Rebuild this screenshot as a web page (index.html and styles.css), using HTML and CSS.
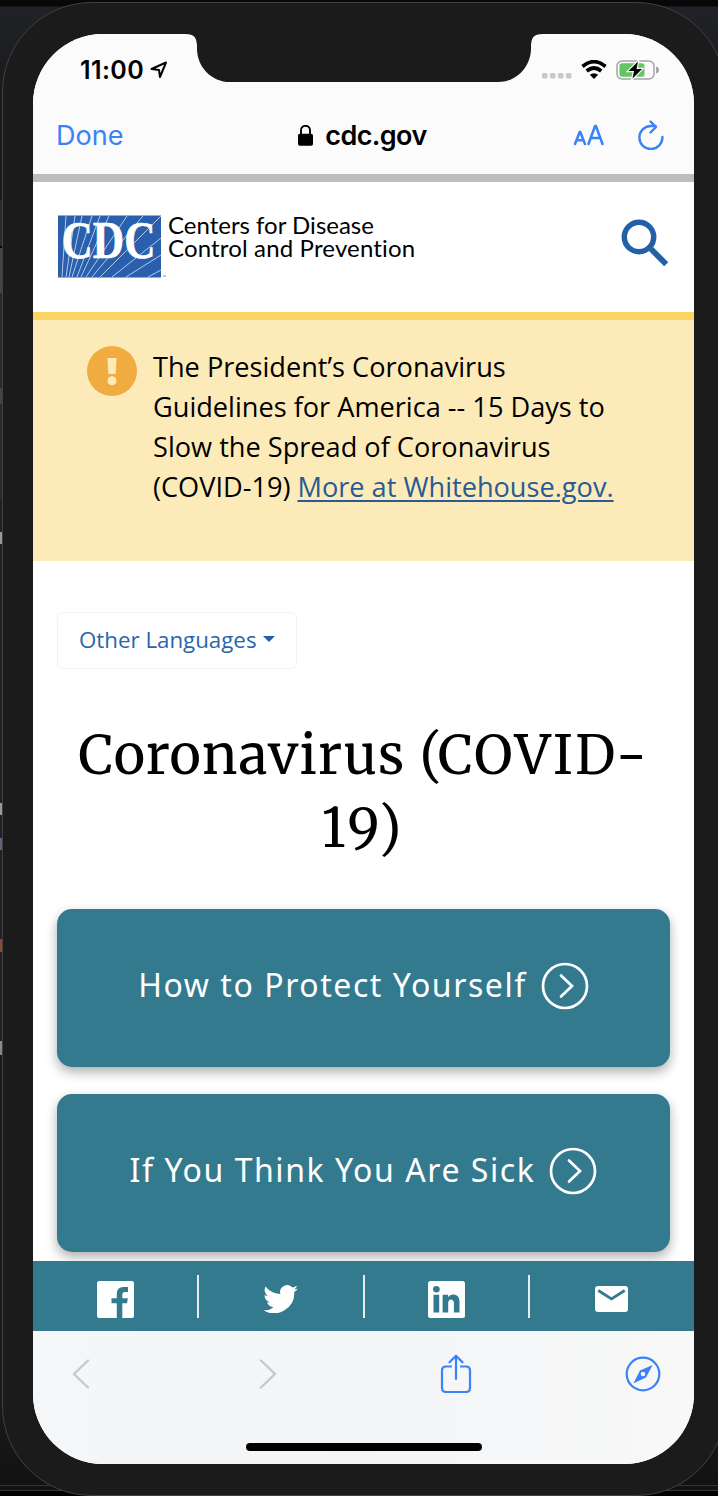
FILE: index.html
```html
<!DOCTYPE html>
<html lang="en">
<head>
<meta charset="utf-8">
<title>Coronavirus (COVID-19)</title>
<link rel="stylesheet" href="styles.css">
</head>
<body>
<div class="desktop">
  <div class="phone">
    <div class="screen">
      <svg class="notch" viewBox="0 0 358 49"><path d="M0 0C10 0 11.500 4 12 12C11 32 26 48 45 48H313C332 48 347 32 346 12C346.500 4 348 0 358 0Z" fill="#1b1b1b"/></svg>

      <div class="status">
        <div class="clock"><span>11:00</span>
          <svg width="18" height="18" viewBox="0 0 18 18"><path d="M1.500 8L16 1.500L10 16L9 9Z" fill="none" stroke="#000" stroke-width="2" stroke-linejoin="round"/></svg>
        </div>
        <div class="signals">
          <svg width="30" height="20" viewBox="0 0 30 20" fill="#c8c8c8"><rect x="0" y="13" width="5.500" height="5.500" rx="1.500"/><rect x="8" y="13" width="5.500" height="5.500" rx="1.500"/><rect x="16" y="13" width="5.500" height="5.500" rx="1.500"/><rect x="24" y="13" width="5.500" height="5.500" rx="1.500"/></svg>
          <svg width="26" height="20" viewBox="0 0 26 20"><path d="M1.500 6.500Q13-3.200 24.500 6.500M5.700 11Q13 5 20.300 11" fill="none" stroke="#000" stroke-width="3.700"/><path d="M13 19L8.800 14.800Q13 11.600 17.200 14.800Z"/></svg>
          <svg width="44" height="20" viewBox="0 0 44 20"><rect x="1" y="1" width="37" height="18" rx="5" fill="none" stroke="#a5a5a5" stroke-width="1.500"/><path d="M40 6.500Q43 7 43 10T40 13.500Z" fill="#a5a5a5"/><rect x="3.500" y="3.300" width="25" height="13.500" rx="2.500" fill="#65c466"/><path d="M22 1.500L12.500 11H18L16.500 18.500L26 9H20.500Z" stroke="#fbfbfb" stroke-width="2.400"/><path d="M22 1.500L12.500 11H18L16.500 18.500L26 9H20.500Z"/></svg>
        </div>
      </div>

      <div class="addressbar">
        <span class="done">Done</span>
        <div class="site">
          <svg width="15" height="21" viewBox="0 0 15 21"><path d="M3 10V5.500C3-.8 12-.8 12 5.500V10" fill="none" stroke="#000" stroke-width="1.900"/><rect y="8.800" width="15" height="12" rx="1.800"/></svg>
          <span>cdc.gov</span>
        </div>
        <div class="tools">
          <svg width="32" height="22" viewBox="0 0 32 22" fill="none" stroke="#3982f7" stroke-width="2.500" stroke-linecap="round" stroke-linejoin="round"><path d="M2 20L6.700 8H7.300L12 20M3.700 16.200H10.300M15.500 20L22.100 2H22.900L29.500 20M18 14H27"/></svg>
          <svg width="26" height="30" viewBox="0 0 26 30" fill="none" stroke="#3982f7" stroke-width="2.400" stroke-linecap="round" stroke-linejoin="round"><path d="M24.400 17A11.500 11.500 0 1 1 12.900 6H17.500M12.500 1.500L18 7L12.500 12.500"/></svg>
        </div>
      </div>

      <div class="masthead">
        <svg class="logo" width="110" height="63" viewBox="0 0 110 63"><rect y=".5" width="103" height="62" fill="#295fac"/><g fill="none" stroke="#c3d6ee" stroke-width=".9"><path d="M4 62L8 1M8 62L17 1M11 62L24 1M14 62L34 1M19 62L42 1M23 62L51 1M28 62L69 1M34 62L85 1M42 62L103 1M54 62L103 23M68 62L103 40M90 62L103 55"/></g><text x="3.500" y="43" textLength="94" lengthAdjust="spacingAndGlyphs" class="monogram">CDC</text><path d="M105 61H108" stroke="#6c91c8"/></svg>
        <div class="agency"><p>Centers for Disease</p><p>Control and Prevention</p></div>
        <svg class="search" width="48" height="48" viewBox="0 0 48 48" fill="none" stroke="#2460a8"><circle cx="18" cy="18" r="14.700" stroke-width="5.500"/><path d="M30 30L45.200 45.200" stroke-width="5.800"/></svg>
      </div>

      <div class="alert">
        <svg width="50" height="50" viewBox="0 0 50 50"><circle cx="25" cy="25" r="25" fill="#f0ac41"/><path d="M20.500 13Q20.500 12 21.500 12H28.500Q29.500 12 29.500 13L28.700 27Q28.600 28 27.600 28H22.400Q21.400 28 21.300 27Z" fill="#fcebb9"/><circle cx="25" cy="34.700" r="4.500" fill="#fcebb9"/></svg>
        <p>The President’s Coronavirus<br>Guidelines for America -- 15 Days to<br>Slow the Spread of Coronavirus<br>(COVID-19) <a>More at Whitehouse.gov.</a></p>
      </div>

      <div class="content">
        <div class="languages"><span>Other Languages</span><i class="caret"></i></div>
        <h1>Coronavirus <span class="wide">(COVID-</span><br><span class="wider">19)</span></h1>
        <div class="card"><span>How to Protect Yourself</span>
          <svg width="48" height="48" viewBox="0 0 48 48" fill="none" stroke="#fff" stroke-width="2.700" stroke-linecap="round"><circle cx="24" cy="24" r="22"/><path d="M20 13.500L31 24L20 34.500"/></svg>
        </div>
        <div class="card"><span>If You Think You Are Sick</span>
          <svg width="48" height="48" viewBox="0 0 48 48" fill="none" stroke="#fff" stroke-width="2.700" stroke-linecap="round"><circle cx="24" cy="24" r="22"/><path d="M20 13.500L31 24L20 34.500"/></svg>
        </div>
      </div>

      <div class="share">
        <div><svg width="37" height="37" viewBox="0 0 37 37"><path fill="#fff" d="M2 0H35Q37 0 37 2V35Q37 37 35 37H25.300V22.300H30L30.800 17.200H25.300V13.500Q25.300 11 28 11H31V6H26.500Q19.800 6 19.800 13V17.200H14.500V22.300H19.800V37H2Q0 37 0 35V2Q0 0 2 0Z"/></svg></div>
        <div><svg width="35" height="29" viewBox="0 1.500 24 20"><path fill="#fff" d="M24 4.600c-.9.400-1.800.7-2.800.8 1-.6 1.800-1.600 2.200-2.700-1 .6-2 1-3.100 1.200A4.900 4.900 0 0 0 11.900 8.400C7.700 8.200 4.100 6.200 1.700 3.200A4.900 4.900 0 0 0 3.200 9.700C2.400 9.700 1.700 9.500 1 9.100v.1c0 2.300 1.600 4.300 3.900 4.800-.7.200-1.500.2-2.200.1.600 2 2.400 3.400 4.600 3.400A9.900 9.900 0 0 1 0 19.500 14 14 0 0 0 21.500 7.100c1-.7 1.800-1.500 2.500-2.500Z"/></svg></div>
        <div><svg width="37" height="37" viewBox="0 0 37 37"><rect width="37" height="37" rx="2.500" fill="#fff"/><circle cx="8.400" cy="8.300" r="3.300" fill="#337a8f"/><path fill="#337a8f" d="M5.500 13.700H11.200V31.500H5.500ZM14.600 13.700H20.100V16.200C22.900 12.100 31.500 12.400 31.500 20.400V31.500H25.900V22C25.900 17.200 20.200 17.300 20.200 21.800V31.500H14.600Z"/></svg></div>
        <div><svg width="33" height="26" viewBox="0 0 33 26"><rect width="33" height="26" rx="3" fill="#fff"/><path d="M3.300 4.500L16.500 12.900L29.700 4.500" fill="none" stroke="#337a8f" stroke-width="2.800"/></svg></div>
      </div>

      <div class="bottom">
        <div class="toolbar">
          <svg width="36" height="30" viewBox="0 0 18 30" class="nav"><path d="M16 1.500L2 15L16 28.500"/></svg>
          <svg width="36" height="30" viewBox="0 0 18 30" class="nav"><path d="M2 1.500L16 15L2 28.500"/></svg>
          <svg width="36" height="40" viewBox="0 0 32 40" class="tool"><path d="M11 12.500H6Q2 12.500 2 16.500V34Q2 38 6 38H26Q30 38 30 34V16.500Q30 12.500 26 12.500H21M16 25V2.500M9.500 8.300L16 1.800L22.500 8.300"/></svg>
          <svg width="36" height="36" viewBox="0 0 36 36" class="tool"><circle cx="18" cy="18" r="16.300"/><path fill="#3982f7" stroke="none" d="M27.600 9L21 21.500L8.500 27.200L15 14.500ZM18 15.700A2.300 2.300 0 1 0 18 20.300A2.300 2.300 0 1 0 18 15.700Z" fill-rule="evenodd"/></svg>
        </div>
        <div class="home"><i></i></div>
      </div>
    </div>
  </div>
</div>
</body>
</html>
```
FILE: styles.css
```css
* { box-sizing: border-box; }
body { margin: 0; width: 718px; height: 1496px; overflow: hidden; }
svg { display: block; flex: none; }
p, h1 { margin: 0; }
.desktop {
  width: 718px; height: 1496px; overflow: hidden; padding: 2px 0 0 2px;
  background:
    linear-gradient(#353535 0 0) 0 1485px / 718px 1px no-repeat,
    linear-gradient(#353535 0 0) 0 1490px / 718px 1px no-repeat,
    linear-gradient(#000 0 0) 0 1491px / 718px 5px no-repeat,
    linear-gradient(transparent 200px, #2b2b2b 200px 246px, #000 246px 248px, #444 248px 293px, #2b2b2b 293px 388px, #444 388px 404px, #2b2b2b 404px 499px, #202126 499px 532px, #999 532px 544px, #202126 544px 803px, #999 803px 815px, #202126 815px 838px, #646081 838px 850px, #202126 850px 939px, #8c4939 939px 952px, #202126 952px 1041px, #888 1041px 1055px, transparent 1055px) 0 0 / 3px 1496px no-repeat,
    linear-gradient(#080808 0 6px, #202227 7px, #191a1d 100px, #191a1d 1400px, #111 1496px);
}
.phone { width: 724px; height: 1494px; padding: 31px 30px 30px 30px; border: 1px solid #414141; border-radius: 90px; background: #1b1b1b; }
.screen { position: relative; display: flex; flex-direction: column; width: 661px; height: 1430px; overflow: hidden; border-radius: 70px; background: #fff; color: #000; font-family: Inter, "Liberation Sans", sans-serif; }
.notch { position: absolute; top: 0; left: 152px; width: 358px; height: 49px; }
.status { display: flex; justify-content: space-between; align-items: center; height: 72px; padding: 0 34px 0 47px; background: #fbfbfb; }
.clock { display: flex; align-items: center; gap: 6px; font-size: 25px; font-weight: 600; letter-spacing: .4px; }
.signals { display: flex; align-items: center; gap: 9px; }
.addressbar { display: grid; grid-template-columns: 150px 1fr 150px; align-items: center; height: 68px; padding: 0 30px 10px 23px; background: #fbfbfb; font-size: 27px; }
.done { color: #3982f7; }
.site { display: flex; align-items: center; justify-content: center; gap: 12px; padding: 0 0 0 5px; font-weight: 600; letter-spacing: -.6px; }
.tools { display: flex; align-items: center; justify-content: flex-end; gap: 33px; }
.masthead { display: flex; align-items: flex-start; height: 138px; padding: 33px 25px 0; border-top: 8px solid #bdbdbd; }
.logo { overflow: visible; }
.monogram { fill: #fff; stroke: #fff; stroke-width: .6px; font: bold 52px "Liberation Serif", serif; }
.agency { margin-top: -2px; font: 24px/23px Lato, sans-serif; font-variant-ligatures: none; white-space: nowrap; }
.agency p + p { letter-spacing: .15px; }
.search { margin: 4px 0 0 auto; }
.alert { display: flex; gap: 16px; height: 249px; padding: 26px 54px 0; border-top: 8px solid #fad566; background: #fcebb9; font: 27.150px/40px "Open Sans", "Noto Sans", sans-serif; white-space: nowrap; }
.alert p { padding-top: 1px; }
.alert a { color: #285b94; text-decoration: underline; text-decoration-thickness: 1.500px; text-underline-offset: 3px; }
.content { flex: 1; min-height: 0; padding: 51px 24px 0; overflow: hidden; }
.languages { display: flex; align-items: center; gap: 6px; width: 240px; height: 57px; padding: 0 0 2px 21px; border: 1.500px solid #f3f3f3; border-radius: 6px; color: #2a65ac; font: 22.300px "Open Sans", sans-serif; }
.caret { margin-bottom: 2px; border: 6px solid transparent; border-top-color: #2460a8; border-bottom: 0; }
h1 { padding: 50px 0 44px; text-align: center; white-space: nowrap; font: 53.500px/73px Merriweather, "DejaVu Serif", serif; letter-spacing: 1.200px; }
.wide { letter-spacing: 2.100px; }
.wider { letter-spacing: 4px; }
.card { display: flex; align-items: center; justify-content: center; gap: 14px; height: 158px; margin-bottom: 27px; padding-bottom: 4px; border-radius: 15px; background: #337a8f; box-shadow: 0 5px 12px rgba(0, 0, 0, .32); color: #fff; font: 32px "Noto Sans", sans-serif; letter-spacing: 1.560px; }
.card span { padding-bottom: 4px; }
.share { display: grid; grid-template-columns: repeat(4, 1fr); align-items: center; height: 70px; background: #337a8f; }
.share div { display: flex; align-items: center; justify-content: center; height: 43px; padding-top: 6px; }
.share div + div { margin-left: -1px; border-left: 2px solid #e4eff1; }
.share div:nth-child(2) { padding: 4px 2px 0 0; }
.toolbar { display: flex; justify-content: space-between; align-items: center; height: 86px; padding: 0 33px 0 30px; }
.bottom { height: 133px; background: linear-gradient(90deg, #f4f6f7, #f3f5f7 50%, #f8f8f8); }
.nav { fill: none; stroke: #c7c8ca; stroke-width: 2.400; stroke-linecap: round; stroke-linejoin: round; }
.tool { fill: none; stroke: #3982f7; stroke-width: 2.200; stroke-linecap: round; stroke-linejoin: round; }
.home { display: flex; justify-content: center; height: 47px; padding: 26px 0 0 0; }
.home i { width: 236px; height: 8px; border-radius: 4px; background: #000; }
```
